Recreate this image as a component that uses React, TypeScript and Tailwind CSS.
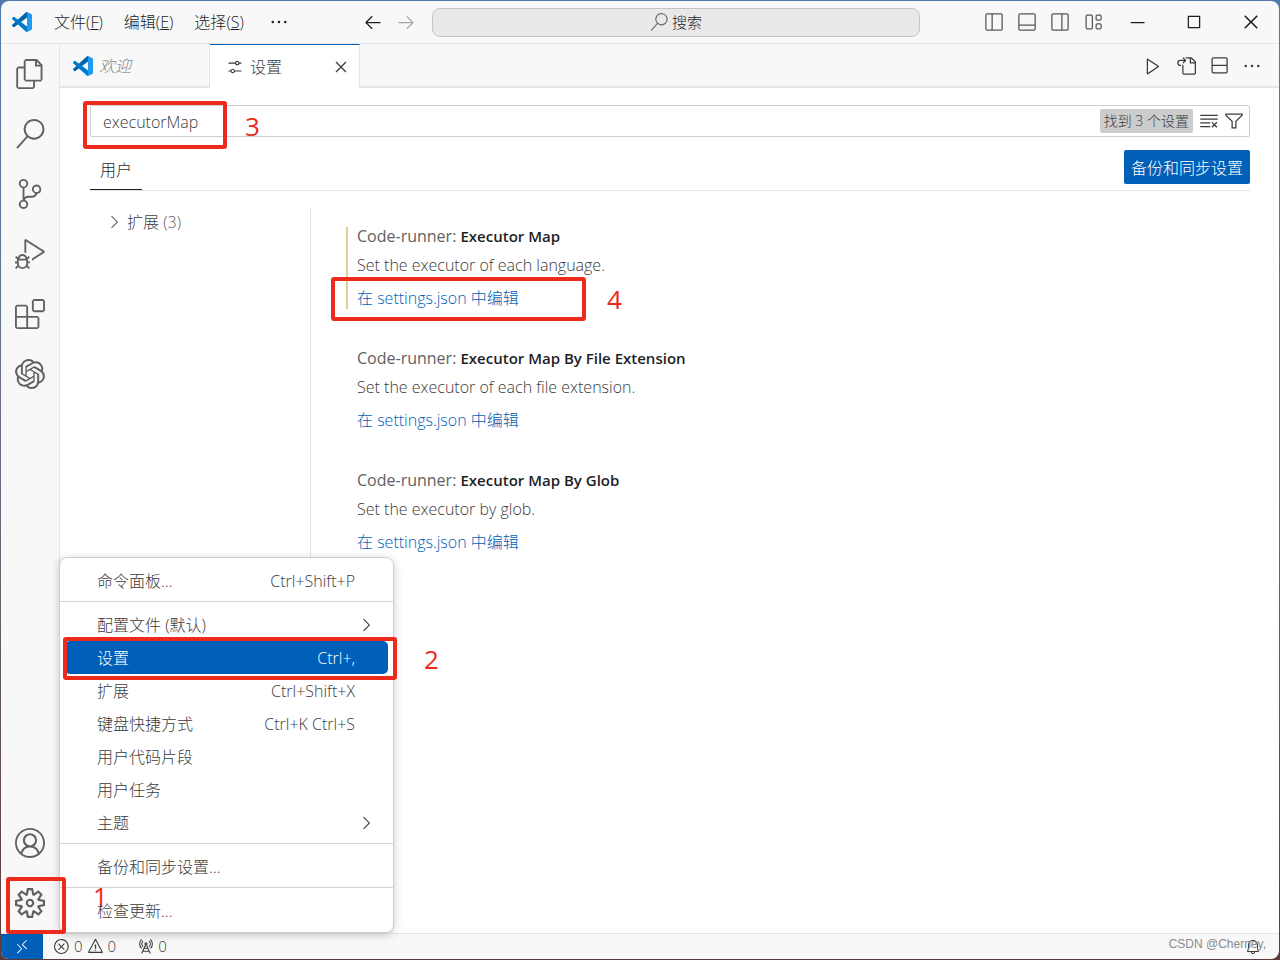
import React, { useState } from 'react';
import {
    VscAccount,
    VscArrowLeft,
    VscArrowRight,
    VscBell,
    VscChevronRight,
    VscChromeClose,
    VscChromeMaximize,
    VscChromeMinimize,
    VscClearAll,
    VscClose,
    VscDebugAlt,
    VscEllipsis,
    VscError,
    VscExtensions,
    VscFiles,
    VscFilter,
    VscGoToFile,
    VscLayout,
    VscLayoutPanelOff,
    VscLayoutSidebarLeftOff,
    VscLayoutSidebarRightOff,
    VscPlay,
    VscRadioTower,
    VscRemote,
    VscSearch,
    VscSettings,
    VscSourceControl,
    VscSplitVertical,
    VscWarning,
} from 'react-icons/vsc';
import { SiOpenai } from 'react-icons/si';

interface MenuEntry {
    label: string;
    keys?: string;
    submenu?: boolean;
    active?: boolean;
}

const menus = [
    { label: '文件', key: 'F' },
    { label: '编辑', key: 'E' },
    { label: '选择', key: 'S' },
];

const activities = [
    { label: '资源管理器', icon: VscFiles },
    { label: '搜索', icon: VscSearch },
    { label: '源代码管理', icon: VscSourceControl },
    { label: '运行和调试', icon: VscDebugAlt },
    { label: '扩展', icon: VscExtensions },
    { label: 'ChatGPT', icon: SiOpenai },
];

const settings = [
    { name: 'Executor Map', description: 'Set the executor of each language.', modified: true },
    { name: 'Executor Map By File Extension', description: 'Set the executor of each file extension.', modified: false },
    { name: 'Executor Map By Glob', description: 'Set the executor by glob.', modified: false },
];

const menuSections: MenuEntry[][] = [
    [{ label: '命令面板...', keys: 'Ctrl+Shift+P' }],
    [
        { label: '配置文件 (默认)', submenu: true },
        { label: '设置', keys: 'Ctrl+,', active: true },
        { label: '扩展', keys: 'Ctrl+Shift+X' },
        { label: '键盘快捷方式', keys: 'Ctrl+K Ctrl+S' },
        { label: '用户代码片段' },
        { label: '用户任务' },
        { label: '主题', submenu: true },
    ],
    [{ label: '备份和同步设置...' }],
    [{ label: '检查更新...' }],
];

const Logo: React.FC = () => (
    <svg viewBox="0 0 100 100" className="size-5 shrink-0" aria-hidden="true">
        <path fill="#0065A9" d="M96.46 10.8 75.86.88a6.23 6.23 0 0 0-7.11 1.2L1.3 63.58a4.17 4.17 0 0 0 0 6.17l5.51 5a4.17 4.17 0 0 0 5.32.24l81.23-61.62c2.73-2.07 6.64-.12 6.64 3.3v-.24a6.25 6.25 0 0 0-3.54-5.63Z" />
        <path fill="#007ACC" d="m96.46 89.2-20.6 9.92a6.23 6.23 0 0 1-7.11-1.2L1.3 36.42a4.17 4.17 0 0 1 0-6.17l5.51-5a4.17 4.17 0 0 1 5.32-.24l81.23 61.62c2.73 2.07 6.64.12 6.64-3.3v.24a6.25 6.25 0 0 1-3.54 5.63Z" />
        <path fill="#1F9CF0" d="M75.86 99.13a6.23 6.23 0 0 1-7.11-1.21c2.3 2.3 6.25.67 6.25-2.59V4.67c0-3.26-3.94-4.9-6.25-2.59A6.23 6.23 0 0 1 75.86.87l20.6 9.91a6.25 6.25 0 0 1 3.54 5.63v67.18a6.25 6.25 0 0 1-3.54 5.63l-20.6 9.91Z" />
    </svg>
);

const TitleBar: React.FC = () => (
    <header className="flex h-[43px] shrink-0 items-center border-b border-[#e5e5e5] pl-[11px] text-[#1f1f1f]">
        <Logo />
        <nav className="ml-[22px] flex items-center gap-[21px]">
            {menus.map(menu => (
                <button key={menu.key} className="whitespace-nowrap">
                    {menu.label}(<u>{menu.key}</u>)
                </button>
            ))}
            <button aria-label="更多" className="ml-1"><VscEllipsis className="size-5" /></button>
        </nav>
        <div className="ml-[74px] flex gap-[13px]">
            <button aria-label="后退"><VscArrowLeft className="size-5" /></button>
            <button aria-label="前进" className="text-[#a5a5a5]"><VscArrowRight className="size-5" /></button>
        </div>
        <button className="ml-4 flex h-[29px] min-w-0 flex-1 items-center justify-center gap-1 rounded-lg border border-[#c4c4c4] bg-[#e9e9e9] text-[15px]">
            <VscSearch className="size-[18px] text-[#6b6b6b]" />
            搜索
        </button>
        <div className="ml-16 flex gap-[13px] text-[#555555]">
            <button aria-label="切换主侧栏"><VscLayoutSidebarLeftOff className="size-5" /></button>
            <button aria-label="切换面板"><VscLayoutPanelOff className="size-5" /></button>
            <button aria-label="切换辅助侧栏"><VscLayoutSidebarRightOff className="size-5" /></button>
            <button aria-label="自定义布局"><VscLayout className="size-5" /></button>
        </div>
        <div className="ml-[5px] flex">
            <button aria-label="最小化" className="flex w-[57px] justify-center"><VscChromeMinimize className="size-5" /></button>
            <button aria-label="最大化" className="flex w-[57px] justify-center"><VscChromeMaximize className="size-5" /></button>
            <button aria-label="关闭" className="flex w-[57px] justify-center"><VscChromeClose className="size-5" /></button>
        </div>
    </header>
);

const ManageMenu: React.FC = () => (
    <div role="menu" className="absolute bottom-0 left-[58px] z-10 w-[335px] rounded-lg border border-[#cecece] bg-white pb-px text-[#3b3b3b] shadow-[0_2px_10px_rgba(0,0,0,0.2)]">
        {menuSections.map((section, index) => (
            <div key={index} className="border-b border-[#d4d4d4] px-[5px] pt-[6px] pb-1 last:border-b-0">
                {section.map(item => (
                    <div key={item.label} className="relative">
                        <button
                            role="menuitem"
                            className={`flex h-[33px] w-full items-center rounded-[5px] pl-8 ${item.active ? 'bg-[#005fb8] text-white' : ''}`}
                        >
                            <span>{item.label}</span>
                            {item.keys && <span className="mr-[33px] ml-auto">{item.keys}</span>}
                            {item.submenu && <VscChevronRight className="mr-3 ml-auto size-5" />}
                        </button>
                        {item.active && (
                            <>
                                <span className="absolute -top-1 -right-[9px] -bottom-[6px] -left-[2px] rounded-[3px] border-4 border-[#ee2a1c]" />
                                <span className="absolute top-0 left-[359px] text-[26px] leading-9 font-normal text-[#ee2a1c]">2</span>
                            </>
                        )}
                    </div>
                ))}
            </div>
        ))}
    </div>
);

const ActivityBar: React.FC = () => (
    <aside className="flex w-[59px] shrink-0 flex-col border-r border-[#e5e5e5] text-[#616161]">
        {activities.map(({ label, icon: Icon }) => (
            <button key={label} aria-label={label} className="flex h-[60px] items-center justify-center">
                <Icon className="size-[30px]" />
            </button>
        ))}
        <button aria-label="帐户" className="mt-auto flex h-[60px] items-center justify-center">
            <VscAccount className="size-[30px]" />
        </button>
        <div className="relative">
            <button aria-label="管理" className="flex h-[60px] w-full items-center justify-center">
                <svg viewBox="0 0 24 24" fill="currentColor" className="size-[30px]" aria-hidden="true">
                    <path fillRule="evenodd" clipRule="evenodd" d="M19.85 8.75l4.15.83v4.84l-4.15.83 2.35 3.52-3.43 3.43-3.52-2.35-.83 4.15H9.58l-.83-4.15-3.52 2.35-3.43-3.43 2.35-3.52L0 14.42V9.58l4.15-.83L1.8 5.23 5.23 1.8l3.52 2.35L9.58 0h4.84l.83 4.15 3.52-2.35 3.43 3.43-2.35 3.52zm-1.57 5.07l4-.81v-2l-4-.81-.54-1.3 2.29-3.43-1.43-1.43-3.43 2.29-1.3-.54-.81-4h-2l-.81 4-1.3.54-3.43-2.29-1.43 1.43L6.38 8.9l-.54 1.3-4 .81v2l4 .81.54 1.3-2.29 3.43 1.43 1.43 3.43-2.29 1.3.54.81 4h2l.81-4 1.3-.54 3.43 2.29 1.43-1.43-2.29-3.43.54-1.3zm-8.186-4.672A3.43 3.43 0 0 1 12 8.57 3.44 3.44 0 0 1 15.43 12a3.43 3.43 0 1 1-5.336-2.852zm.956 4.274c.281.188.612.288.95.288A1.7 1.7 0 0 0 13.71 12a1.71 1.71 0 1 0-2.66 1.422z" />
                </svg>
            </button>
            <ManageMenu />
            <span className="absolute top-1 -bottom-px left-[5px] z-20 w-[60px] rounded-[3px] border-4 border-[#ee2a1c]" />
            <span className="absolute top-[5px] left-[92px] z-20 text-[26px] leading-9 font-normal text-[#ee2a1c]">1</span>
        </div>
    </aside>
);

const EditorTabs: React.FC = () => (
    <div className="flex h-11 shrink-0 text-[#3b3b3b]">
        <button className="flex w-[150px] items-center gap-[6px] border-r border-b-2 border-[#e5e5e5] pt-[2px] pl-[13px] text-[#868686] italic">
            <Logo />
            欢迎
        </button>
        <div className="flex w-[150px] items-center border-t border-r border-t-[#005fb8] border-r-[#e5e5e5] bg-white pl-4">
            <VscSettings className="size-[18px]" />
            <span className="ml-[6px]">设置</span>
            <button aria-label="关闭设置" className="mr-2 ml-auto"><VscClose className="size-5" /></button>
        </div>
        <div className="flex flex-1 items-center justify-end gap-[13px] border-b-2 border-[#e5e5e5] pt-[2px] pr-[17px]">
            <button aria-label="运行代码"><VscPlay className="size-5" /></button>
            <button aria-label="打开设置 (json)"><VscGoToFile className="size-5" /></button>
            <button aria-label="拆分编辑器"><VscSplitVertical className="size-5" /></button>
            <button aria-label="更多操作"><VscEllipsis className="size-5" /></button>
        </div>
    </div>
);

const SettingsEditor: React.FC = () => {
    const [query, setQuery] = useState('executorMap');

    return (
        <main className="flex flex-1 flex-col bg-white pt-[17px] pr-[29px] pl-[30px]">
            <div className="relative flex h-8 items-center rounded-xs border border-[#cecece] pr-[5px]">
                <input
                    aria-label="搜索设置"
                    value={query}
                    onChange={e => setQuery(e.target.value)}
                    className="min-w-0 flex-1 bg-transparent pt-px pl-3 text-[#3b3b3b] outline-none"
                />
                <span className="rounded-xs bg-[#cccccc] px-1 text-sm leading-6 text-[#3b3b3b]">找到 3 个设置</span>
                <button aria-label="清除设置搜索输入" className="ml-[6px] text-[#3b3b3b]"><VscClearAll className="size-5" /></button>
                <button aria-label="筛选设置" className="ml-[5px] text-[#3b3b3b]"><VscFilter className="size-5" /></button>
                <span className="absolute -top-[5px] -left-2 h-12 w-36 rounded-[3px] border-4 border-[#ee2a1c]" />
                <span className="absolute top-[2px] left-[154px] text-[26px] leading-9 font-normal text-[#ee2a1c]">3</span>
            </div>
            <div className="mt-[13px] flex h-[41px] items-start border-b border-[#e5e5e5]">
                <button className="h-10 border-b border-[#1f1f1f] px-[10px] text-[#1f1f1f]">用户</button>
                <button className="ml-auto h-[34px] rounded-xs bg-[#005fb8] px-[7px] pt-[2px] text-white">备份和同步设置</button>
            </div>
            <div className="mt-[17px] flex flex-1">
                <div className="w-[220px] shrink-0">
                    <button className="ml-[14px] flex h-7 items-center text-[#3b3b3b]">
                        <VscChevronRight className="size-5 text-[#616161]" />
                        <span className="ml-[3px]">扩展 <span className="text-[#616161]">(3)</span></span>
                    </button>
                </div>
                <div className="flex-1 border-l border-[#e5e5e5] pt-[19px] pl-[35px]">
                    {settings.map(setting => (
                        <section
                            key={setting.name}
                            className={`relative mb-10 border-l-2 pl-[9px] ${setting.modified ? 'border-[#e2cd98]' : 'border-transparent'}`}
                        >
                            <h3 className="text-[15px] leading-[18px] font-semibold text-[#1f1f1f]">
                                <span className="text-base leading-[18px] font-normal text-[#616161]">Code-runner: </span>
                                {setting.name}
                            </h3>
                            <p className="mt-[10px] leading-5 text-[#3b3b3b]">{setting.description}</p>
                            <a href="#settings-json" className="mt-3 block leading-[22px] text-[#005fb8]">在 settings.json 中编辑</a>
                            {setting.modified && (
                                <>
                                    <span className="absolute -bottom-3 -left-[17px] h-11 w-[255px] rounded-[3px] border-4 border-[#ee2a1c]" />
                                    <span className="absolute -bottom-2 left-[259px] text-[26px] leading-9 font-normal text-[#ee2a1c]">4</span>
                                </>
                            )}
                        </section>
                    ))}
                </div>
            </div>
        </main>
    );
};

const StatusBar: React.FC = () => (
    <footer className="relative flex h-[26px] shrink-0 items-center border-t border-[#e5e5e5] text-[15px] text-[#3b3b3b]">
        <button aria-label="打开远程窗口" className="flex h-full w-[42px] items-center justify-center bg-[#005fb8] text-white">
            <VscRemote className="size-4" />
        </button>
        <button className="ml-[10px] flex items-center gap-1">
            <VscError className="size-[17px]" />
            0
            <VscWarning className="size-[17px]" />
            0
        </button>
        <button className="ml-[21px] flex items-center gap-1">
            <VscRadioTower className="size-[17px]" />
            0
        </button>
        <button aria-label="通知" className="mr-[18px] ml-auto"><VscBell className="size-4" /></button>
        <span className="absolute right-[13px] bottom-[7px] font-['Liberation_Sans'] text-xs text-[#8a8a8a]">CSDN @Cherney,</span>
    </footer>
);

const App: React.FC = () => {
    return (
        <div className="flex min-h-screen flex-col bg-linear-to-b from-[#4f78ad] via-[#6b6c80] to-[#5a3a38] p-px font-['Open_Sans','Noto_Sans_CJK_SC',sans-serif] text-base font-light">
            <div className="flex flex-1 flex-col overflow-hidden rounded-lg bg-[#f8f8f8]">
                <TitleBar />
                <div className="flex flex-1">
                    <ActivityBar />
                    <div className="flex min-w-0 flex-1 flex-col">
                        <EditorTabs />
                        <SettingsEditor />
                    </div>
                </div>
                <StatusBar />
            </div>
        </div>
    );
};

export default App;
